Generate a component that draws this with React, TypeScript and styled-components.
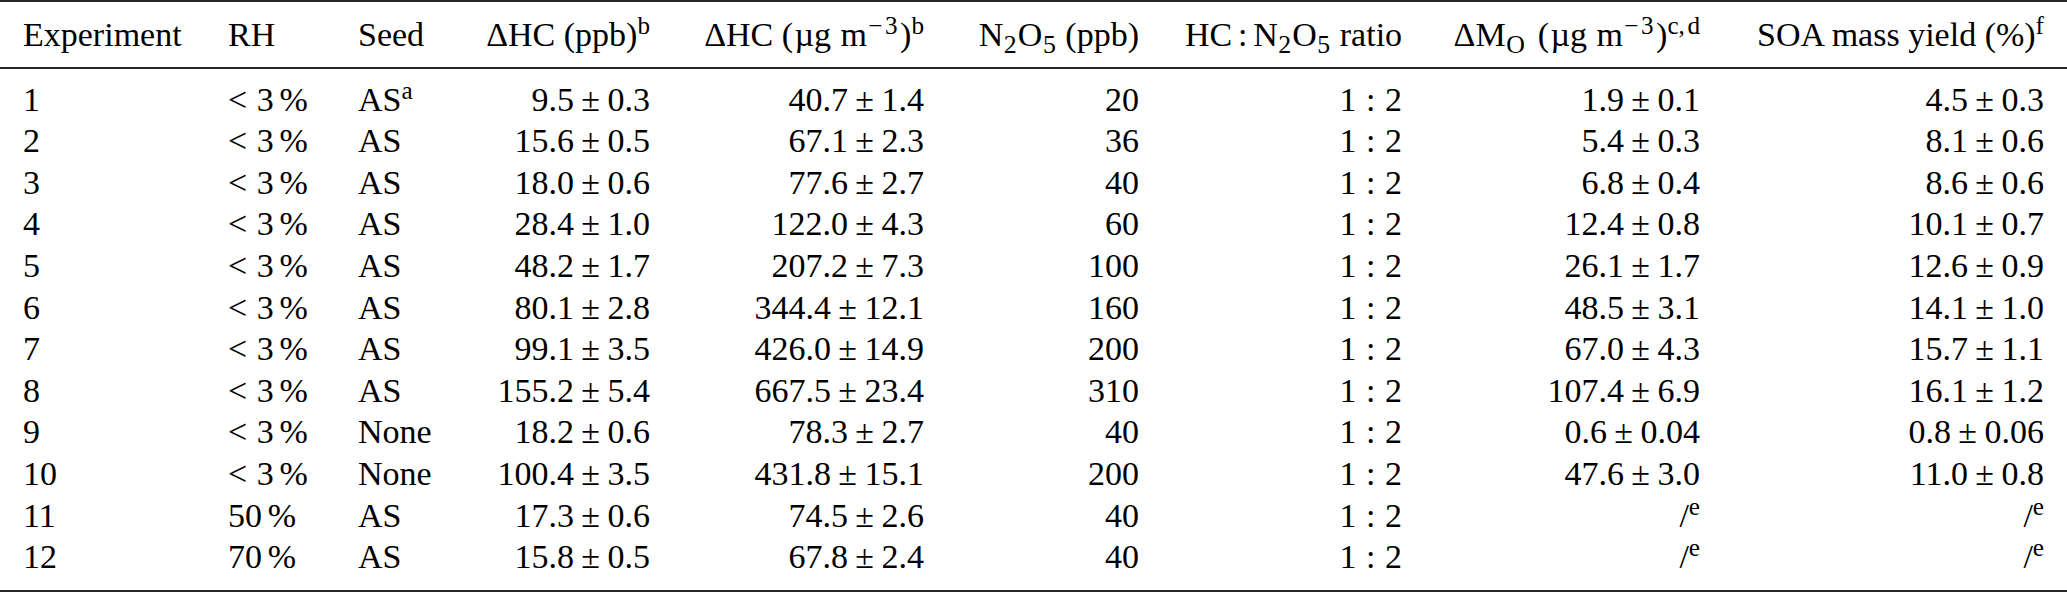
import React from 'react';
import styled, { createGlobalStyle } from 'styled-components';

const serif = '"Liberation Serif", "Times New Roman", Times, serif';

const GlobalStyle = createGlobalStyle`
  html, body {
    margin: 0;
    padding: 0;
    background: #fff;
  }
  body {
    font-family: ${serif};
    color: #000;
  }
`;

const Table = styled.div`
  width: 2067px;
  border-top: 2px solid #262626;
  border-bottom: 2px solid #262626;
  font-family: ${serif};
  font-size: 34px;
  line-height: 41.6px;
`;

const Row = styled.div`
  display: grid;
  grid-template-columns: 205px 130px 122px 216px 274px 215px 263px 298px 344px;
`;

const HeadRow = styled(Row)`
  padding: 12px 0 11px;
  border-bottom: 2px solid #262626;
`;

const Body = styled.div`
  padding: 10px 0 12px;
`;

const Cell = styled.div<{ $right?: boolean }>`
  padding: 0 23px;
  text-align: ${(p) => (p.$right ? 'right' : 'left')};
  white-space: nowrap;
`;

const Sup = styled.sup<{ $after?: number }>`
  font-size: 0.74em;
  line-height: 0;
  vertical-align: 0.48em;
  margin-right: ${(p) => p.$after ?? 0}em;
`;

const Sub = styled.sub<{ $after?: number }>`
  font-size: 0.76em;
  line-height: 0;
  vertical-align: -0.28em;
  margin: 0 ${(p) => p.$after ?? 0.04}em 0 0.02em;
`;

const Minus = styled.span`
  margin: 0 0.1em 0 0.05em;
`;

const Comma = styled.span`
  margin-right: 0.1em;
`;

const Op = styled.span`
  margin: 0 0.22em;
`;

const Rel = styled.span<{ $lead?: boolean }>`
  margin: 0 0.28em 0 ${(p) => (p.$lead ? '0' : '0.28em')};
`;

const Gap = styled.span<{ $w: number }>`
  margin-left: ${(p) => p.$w}em;
`;

const N2O5 = () => (
  <>
    N<Sub>2</Sub>O<Sub>5</Sub>
  </>
);

const Unit = () => (
  <>
    (<Gap $w={0.04} />
    µg
    <Gap $w={0.28} />m
    <Sup $after={0.1}>
      <Minus>−</Minus>3
    </Sup>
    )
  </>
);

const PM = ({ v }: { v: string }) => {
  if (v === '/') {
    return (
      <>
        /<Sup>e</Sup>
      </>
    );
  }
  const [a, b] = v.split('±');
  return (
    <>
      {a}
      <Op>±</Op>
      {b}
    </>
  );
};

const RH = ({ v }: { v: string }) =>
  v === '<3' ? (
    <>
      <Rel $lead>&lt;</Rel>3<Gap $w={0.17} />%
    </>
  ) : (
    <>
      {v}
      <Gap $w={0.17} />%
    </>
  );

type Data = [string, string, string, string, string, string, string, string];

const rows: Data[] = [
  ['1', '<3', 'AS*', '9.5±0.3', '40.7±1.4', '20', '1.9±0.1', '4.5±0.3'],
  ['2', '<3', 'AS', '15.6±0.5', '67.1±2.3', '36', '5.4±0.3', '8.1±0.6'],
  ['3', '<3', 'AS', '18.0±0.6', '77.6±2.7', '40', '6.8±0.4', '8.6±0.6'],
  ['4', '<3', 'AS', '28.4±1.0', '122.0±4.3', '60', '12.4±0.8', '10.1±0.7'],
  ['5', '<3', 'AS', '48.2±1.7', '207.2±7.3', '100', '26.1±1.7', '12.6±0.9'],
  ['6', '<3', 'AS', '80.1±2.8', '344.4±12.1', '160', '48.5±3.1', '14.1±1.0'],
  ['7', '<3', 'AS', '99.1±3.5', '426.0±14.9', '200', '67.0±4.3', '15.7±1.1'],
  ['8', '<3', 'AS', '155.2±5.4', '667.5±23.4', '310', '107.4±6.9', '16.1±1.2'],
  ['9', '<3', 'None', '18.2±0.6', '78.3±2.7', '40', '0.6±0.04', '0.8±0.06'],
  ['10', '<3', 'None', '100.4±3.5', '431.8±15.1', '200', '47.6±3.0', '11.0±0.8'],
  ['11', '50', 'AS', '17.3±0.6', '74.5±2.6', '40', '/', '/'],
  ['12', '70', 'AS', '15.8±0.5', '67.8±2.4', '40', '/', '/'],
];

const App: React.FC = () => (
  <>
    <GlobalStyle />
    <Table>
      <HeadRow>
        <Cell>Experiment</Cell>
        <Cell>RH</Cell>
        <Cell>Seed</Cell>
        <Cell $right>
          ΔHC (ppb)<Sup>b</Sup>
        </Cell>
        <Cell $right>
          ΔHC <Unit />
          <Sup>b</Sup>
        </Cell>
        <Cell $right>
          <N2O5 /> (ppb)
        </Cell>
        <Cell $right>
          HC<Gap $w={0.17} />:<Gap $w={0.17} />
          <N2O5 /> ratio
        </Cell>
        <Cell $right>
          ΔM<Sub $after={0.12}>O</Sub>
          <Gap $w={0.04} /> <Unit />
          <Sup>
            c<Comma>,</Comma>d
          </Sup>
        </Cell>
        <Cell $right>
          SOA mass yield (%)<Sup>f</Sup>
        </Cell>
      </HeadRow>
      <Body>
        {rows.map((r) => (
          <Row key={r[0]}>
            <Cell>{r[0]}</Cell>
            <Cell>
              <RH v={r[1]} />
            </Cell>
            <Cell>
              {r[2] === 'AS*' ? (
                <>
                  AS<Sup>a</Sup>
                </>
              ) : (
                r[2]
              )}
            </Cell>
            <Cell $right>
              <PM v={r[3]} />
            </Cell>
            <Cell $right>
              <PM v={r[4]} />
            </Cell>
            <Cell $right>{r[5]}</Cell>
            <Cell $right>
              1<Rel>:</Rel>2
            </Cell>
            <Cell $right>
              <PM v={r[6]} />
            </Cell>
            <Cell $right>
              <PM v={r[7]} />
            </Cell>
          </Row>
        ))}
      </Body>
    </Table>
  </>
);

export default App;
